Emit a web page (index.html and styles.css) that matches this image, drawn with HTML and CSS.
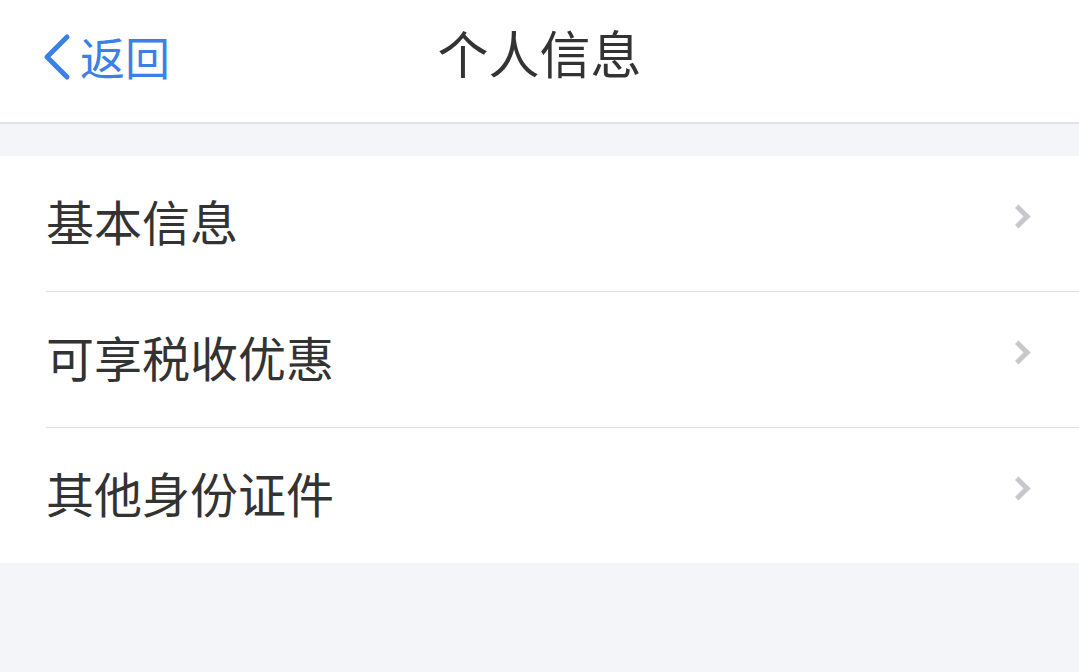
FILE: index.html
```html
<!DOCTYPE html>
<html lang="zh-CN">
<head>
	<meta charset="UTF-8">
	<title>个人信息</title>
	<link rel="stylesheet" href="styles.css">
</head>
<body>
	<div id="header">
		<a id="back" href="javascript:void(0)">
			<svg class="back-icon" width="28" height="48" viewBox="0 0 28 48"><path d="M24 4 L4 24 L24 44" fill="none" stroke="#3b80e6" stroke-width="5" stroke-linecap="round" stroke-linejoin="round"/></svg>
			<span>返回</span>
		</a>
		<h1 id="title">个人信息</h1>
	</div>
	<div id="gap"></div>
	<ul id="list">
		<li><span>基本信息</span><i class="arrow"></i></li>
		<li><span>可享税收优惠</span><i class="arrow"></i></li>
		<li><span>其他身份证件</span><i class="arrow"></i></li>
	</ul>
</body>
</html>
```

FILE: styles.css
```css
*{padding: 0px;margin: 0px;}
body{background: #f4f5f9;font-family: "Noto Sans CJK SC", "Noto Sans", sans-serif;color: #333;}
#header{height: 122px;background: #fff;border-bottom: 2px solid #e1e1e6;position: relative;display: flex;align-items: center;justify-content: center;}
#back{position: absolute;left: 43px;top: 33px;display: flex;align-items: center;color: #3b80e6;text-decoration: none;font-size: 45px;line-height: 48px;}
#back .back-icon{display: block;margin-right: 9px;}
#title{font-size: 51px;font-weight: normal;line-height: 60px;margin-top: -18px;}
#gap{height: 32px;}
#list{background: #fff;list-style: none;}
#list li{height: 135px;margin-left: 46px;padding-right: 46px;display: flex;align-items: center;justify-content: space-between;font-size: 48px;border-bottom: 1px solid #e0e0e5;}
#list li:last-child{border-bottom: none;}
#list li span{margin-top: -8px;}
.arrow{width: 12px;height: 12px;border-top: 5px solid #c7c7cc;border-right: 5px solid #c7c7cc;transform: rotate(45deg);margin-top: -14px;margin-right: 6px;}
```
